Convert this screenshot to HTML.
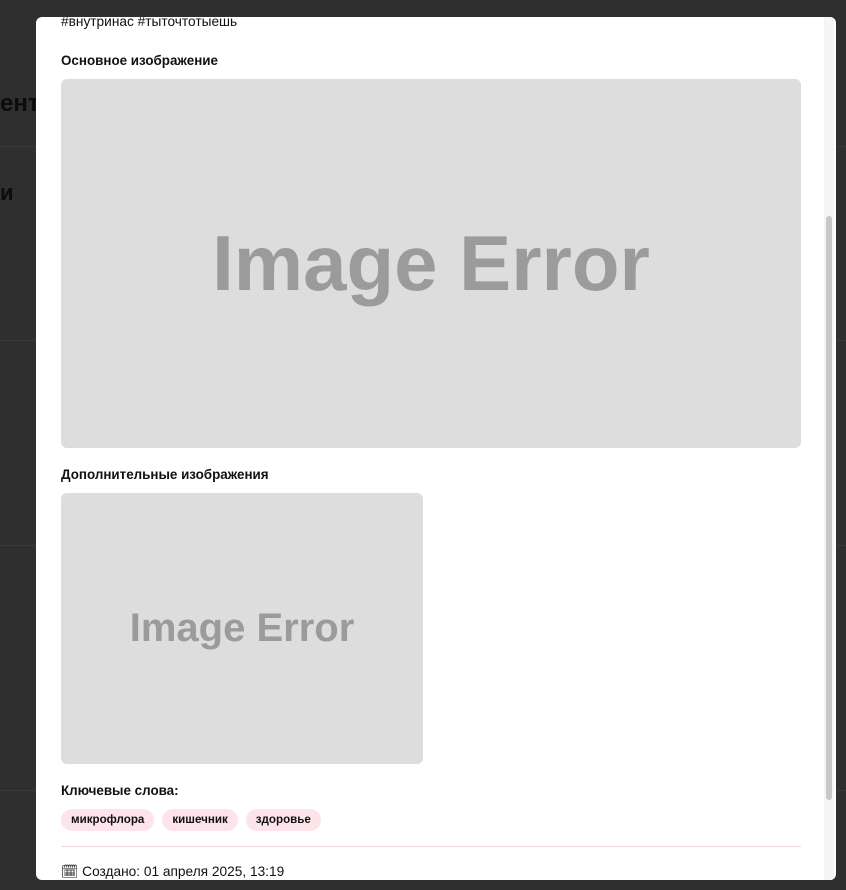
<!DOCTYPE html>
<html><head><meta charset="utf-8"><style>
body{margin:0;width:846px;height:890px;background:#2f2f2f;position:relative;overflow:hidden;font-family:"Segoe UI","Liberation Sans","Noto Sans CJK SC",sans-serif;}
.bg{position:absolute;color:#0c0c0c;font-weight:700;}
.line{position:absolute;height:1px;background:#3a3a3a;}
.modal{position:absolute;left:36px;top:17px;width:800px;height:863px;background:#fff;border-radius:6px;overflow:hidden;}
.t{position:absolute;left:25px;color:#111;}
.h{font-size:13.4px;font-weight:700;}
.img{position:absolute;background:#dddddd;border-radius:6px;display:flex;align-items:center;justify-content:center;color:#9b9b9b;font-weight:700;font-family:"Liberation Sans",sans-serif;}
.tag{display:inline-block;background:#fde4ea;border-radius:11px;padding:0 10px;height:22px;line-height:22px;font-size:11.6px;font-weight:600;margin-right:8px;color:#111;}
.sb{position:absolute;right:2px;top:0;width:10px;height:863px;background:#f5f5f5;}
</style></head><body>
<div class="line" style="left:0;top:146px;width:846px"></div>
<div class="line" style="left:0;top:340px;width:846px"></div>
<div class="line" style="left:0;top:545px;width:846px"></div>
<div class="line" style="left:0;top:790px;width:846px"></div>
<div class="bg" style="left:0;top:90px;font-size:24px">ент</div>
<div class="bg" style="left:0;top:180px;font-size:22px">и</div>
<div class="modal">
<div class="t" style="top:-3px;font-size:13.7px">#внутринас #тыточтотыешь</div>
<div class="t h" style="top:36px">Основное изображение</div>
<div class="img" style="left:25px;top:62px;width:740px;height:369px;font-size:78px">Image Error</div>
<div class="t h" style="top:450px">Дополнительные изображения</div>
<div class="img" style="left:25px;top:476px;width:362px;height:271px;font-size:40px">Image Error</div>
<div class="t h" style="top:766px">Ключевые слова:</div>
<div class="t" style="top:792px"><span class="tag">микрофлора</span><span class="tag">кишечник</span><span class="tag">здоровье</span></div>
<div style="position:absolute;left:25px;top:829px;width:740px;height:1px;background:#f0d8de"></div>
<div class="t" style="top:847px;font-size:13.7px">🗓︎ Создано: 01 апреля 2025, 13:19</div>
<div class="sb"><div style="position:absolute;left:2px;top:199px;width:6px;height:584px;background:#c8c8c8;border-radius:3px"></div></div>
</div>
</body></html>
